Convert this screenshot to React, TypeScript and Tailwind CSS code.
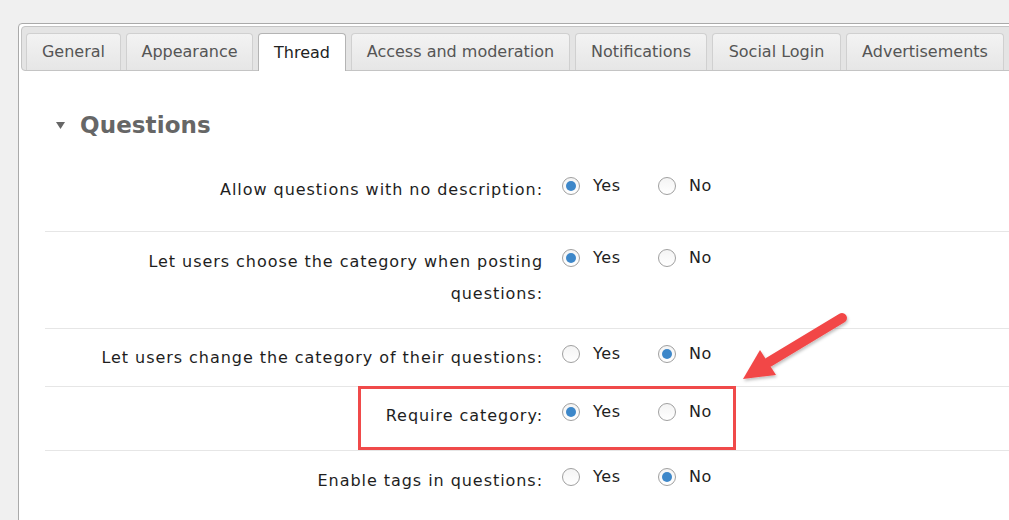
import React from 'react';

const tabs = [
  { label: 'General', w: 'w-[95px]' },
  { label: 'Appearance', w: 'w-[127px]' },
  { label: 'Thread', w: 'w-[88px]', active: true },
  { label: 'Access and moderation', w: 'w-[219px]' },
  { label: 'Notifications', w: 'w-[132px]' },
  { label: 'Social Login', w: 'w-[129px]' },
  { label: 'Advertisements', w: 'w-[158px]' },
];

const rows = [
  { label: 'Allow questions with no description:', value: 'yes', h: 'h-[71px]', pt: 'pt-[14px]' },
  { label: 'Let users choose the category when posting questions:', value: 'yes', h: 'h-[97px]', pt: 'pt-[14px]' },
  { label: 'Let users change the category of their questions:', value: 'no', h: 'h-[58px]', pt: 'pt-[13px]' },
  { label: 'Require category:', value: 'yes', h: 'h-[64px]', pt: 'pt-[13px]' },
  { label: 'Enable tags in questions:', value: 'no', h: 'h-[70px]', pt: 'pt-[14px]' },
];

function Radio({ checked }: { checked: boolean }) {
  return (
    <span className="flex h-[18px] w-[18px] shrink-0 items-center justify-center rounded-full border border-[#a0a0a0] bg-gradient-to-b from-[#f4f4f4] to-white">
      {checked && <span className="h-[10px] w-[10px] rounded-full bg-[#3d87c9]" />}
    </span>
  );
}

function Option({ label, checked }: { label: string; checked: boolean }) {
  return (
    <div className="flex w-[96px] items-center gap-[13px]">
      <Radio checked={checked} />
      <span className="tracking-[0.6px]">{label}</span>
    </div>
  );
}

export default function App() {
  return (
    <div className="relative h-[520px] w-[1009px] overflow-hidden bg-[#f0f0f0] pl-[18px] pt-[23px] font-['DejaVu_Sans',Verdana,sans-serif] text-[16px] text-[#1e1e1e]">
      <div className="h-[600px] w-[1100px] rounded-tl-[4px] border border-[#aaa] bg-white p-[2px]">
        {/* tab strip */}
        <div className="flex h-[45px] items-end gap-[5px] rounded-[4px] border border-[#c4c4c4] bg-[#e4e4e4] pl-[4px]">
          {tabs.map((t) =>
            t.active ? (
              <div
                key={t.label}
                className={`${t.w} -mb-px flex h-[38px] items-center justify-center rounded-t-[4px] border border-b-0 border-[#b4b4b4] bg-white text-[#222]`}
              >
                {t.label}
              </div>
            ) : (
              <div
                key={t.label}
                className={`${t.w} flex h-[37px] items-center justify-center rounded-t-[4px] border border-b-0 border-[#d0d0d0] bg-gradient-to-b from-[#f3f3f3] to-[#e6e6e6] text-[#555]`}
              >
                {t.label}
              </div>
            )
          )}
        </div>

        {/* content */}
        <div className="pl-[24px]">
          <div className="flex h-[89px] items-center gap-[15px] pl-[11px] pt-[19px]">
            <svg width="9" height="7" viewBox="0 0 9 7">
              <polygon points="0,0 9,0 4.5,7" fill="#666" />
            </svg>
            <span className="text-[23px] font-bold tracking-[0.1px] text-[#666]">Questions</span>
          </div>

          {rows.map((r, i) => (
            <div key={r.label} className={`${r.h} ${r.pt} flex ${i > 0 ? 'border-t border-[#e6e6e6]' : ''}`}>
              <div className="w-[498px] shrink-0">
                <div className="ml-auto w-[462px] text-right leading-[32px] tracking-[0.95px]">{r.label}</div>
              </div>
              <div className="ml-[19px] flex h-[24px] leading-[24px]">
                <Option label="Yes" checked={r.value === 'yes'} />
                <Option label="No" checked={r.value === 'no'} />
              </div>
            </div>
          ))}
        </div>
      </div>

      {/* annotation overlays */}
      <div className="absolute left-[358px] top-[386px] h-[64px] w-[378px] border-[3px] border-[#f04a4a]" />
      <svg className="absolute left-[735px] top-[305px]" width="120" height="85" viewBox="0 0 120 85">
        <defs>
          <filter id="sh" x="-20%" y="-20%" width="140%" height="140%">
            <feDropShadow dx="1" dy="2" stdDeviation="1.5" floodColor="#000" floodOpacity="0.25" />
          </filter>
        </defs>
        <g filter="url(#sh)">
          <line x1="107" y1="13" x2="34" y2="57" stroke="#f24747" strokeWidth="10" strokeLinecap="round" />
          <polygon points="8,74 25,45 41,70" fill="#f24747" />
        </g>
      </svg>
    </div>
  );
}
